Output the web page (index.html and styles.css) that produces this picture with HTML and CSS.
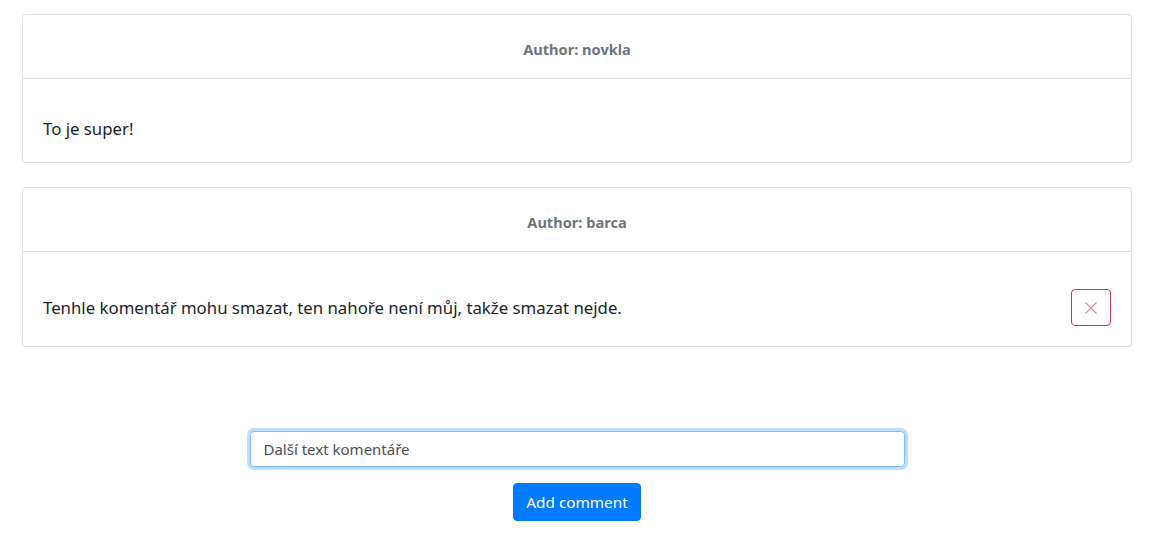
FILE: index.html
```html
<!DOCTYPE html>
<html lang="cs">
<head>
<meta charset="utf-8">
<title>Komentáře</title>
<link rel="stylesheet" href="styles.css">
</head>
<body>
<div class="container">
  <div class="card">
    <div class="card-header">Author: novkla</div>
    <div class="card-body">
      <span class="comment-text">To je super!</span>
    </div>
  </div>
  <div class="card">
    <div class="card-header">Author: barca</div>
    <div class="card-body">
      <span class="comment-text">Tenhle komentář mohu smazat, ten nahoře není můj, takže smazat nejde.</span>
      <button class="btn-delete" type="button" aria-label="Smazat">
        <svg width="14" height="14" viewBox="0 0 14 14"><path d="M1.5 1.5 L12.5 12.5 M12.5 1.5 L1.5 12.5" stroke="#ec80a4" stroke-width="1.1" fill="none"/></svg>
      </button>
    </div>
  </div>
  <form class="comment-form">
    <input class="form-control" type="text" value="Další text komentáře">
    <button class="btn-primary" type="button">Add comment</button>
  </form>
</div>
</body>
</html>
```

FILE: styles.css
```css
* { box-sizing: border-box; }
html, body { margin: 0; padding: 0; background: #fff; }
body {
  font-family: "Segoe UI", "Noto Sans", "Open Sans", sans-serif;
  font-size: 16px;
  line-height: 1.5;
  color: #212529;
}
.container {
  width: 1140px;
  margin: 0 auto;
  padding: 14px 15px 0;
}
.card {
  border: 1px solid #dfdfdf;
  border-radius: 4px;
  background: #fff;
  margin-bottom: 24px;
}
.card-header {
  height: 64px;
  display: flex;
  align-items: center;
  justify-content: center;
  padding-top: 7px;
  border-bottom: 1px solid #dfdfdf;
  color: #6c757d;
  font-weight: 700;
  font-size: 14.6px;
}
.card-body {
  display: flex;
  align-items: center;
  justify-content: space-between;
  padding: 37px 20px 20px;
  min-height: 83px;
}
.comment-text { font-size: 16.8px; }
.btn-delete {
  width: 40px;
  height: 37px;
  border: 1px solid #dc3545;
  border-radius: 4px;
  background: #fff;
  display: flex;
  align-items: center;
  justify-content: center;
  padding: 0;
}
.comment-form {
  margin-top: 84px;
  display: flex;
  flex-direction: column;
  align-items: center;
  gap: 16px;
}
.form-control {
  width: 655px;
  height: 36px;
  border: 1px solid #80bdff;
  border-radius: 4px;
  box-shadow: 0 0 0 3px rgba(0, 123, 255, .25);
  padding: 5px 13px;
  font-family: inherit;
  font-size: 15px;
  color: #495057;
  outline: none;
}
.btn-primary {
  height: 38px;
  padding: 0 12px;
  background: #007bff;
  border: 1px solid #007bff;
  border-radius: 4px;
  color: #fff;
  font-family: inherit;
  font-size: 15.3px;
  line-height: 1.5;
}
```
